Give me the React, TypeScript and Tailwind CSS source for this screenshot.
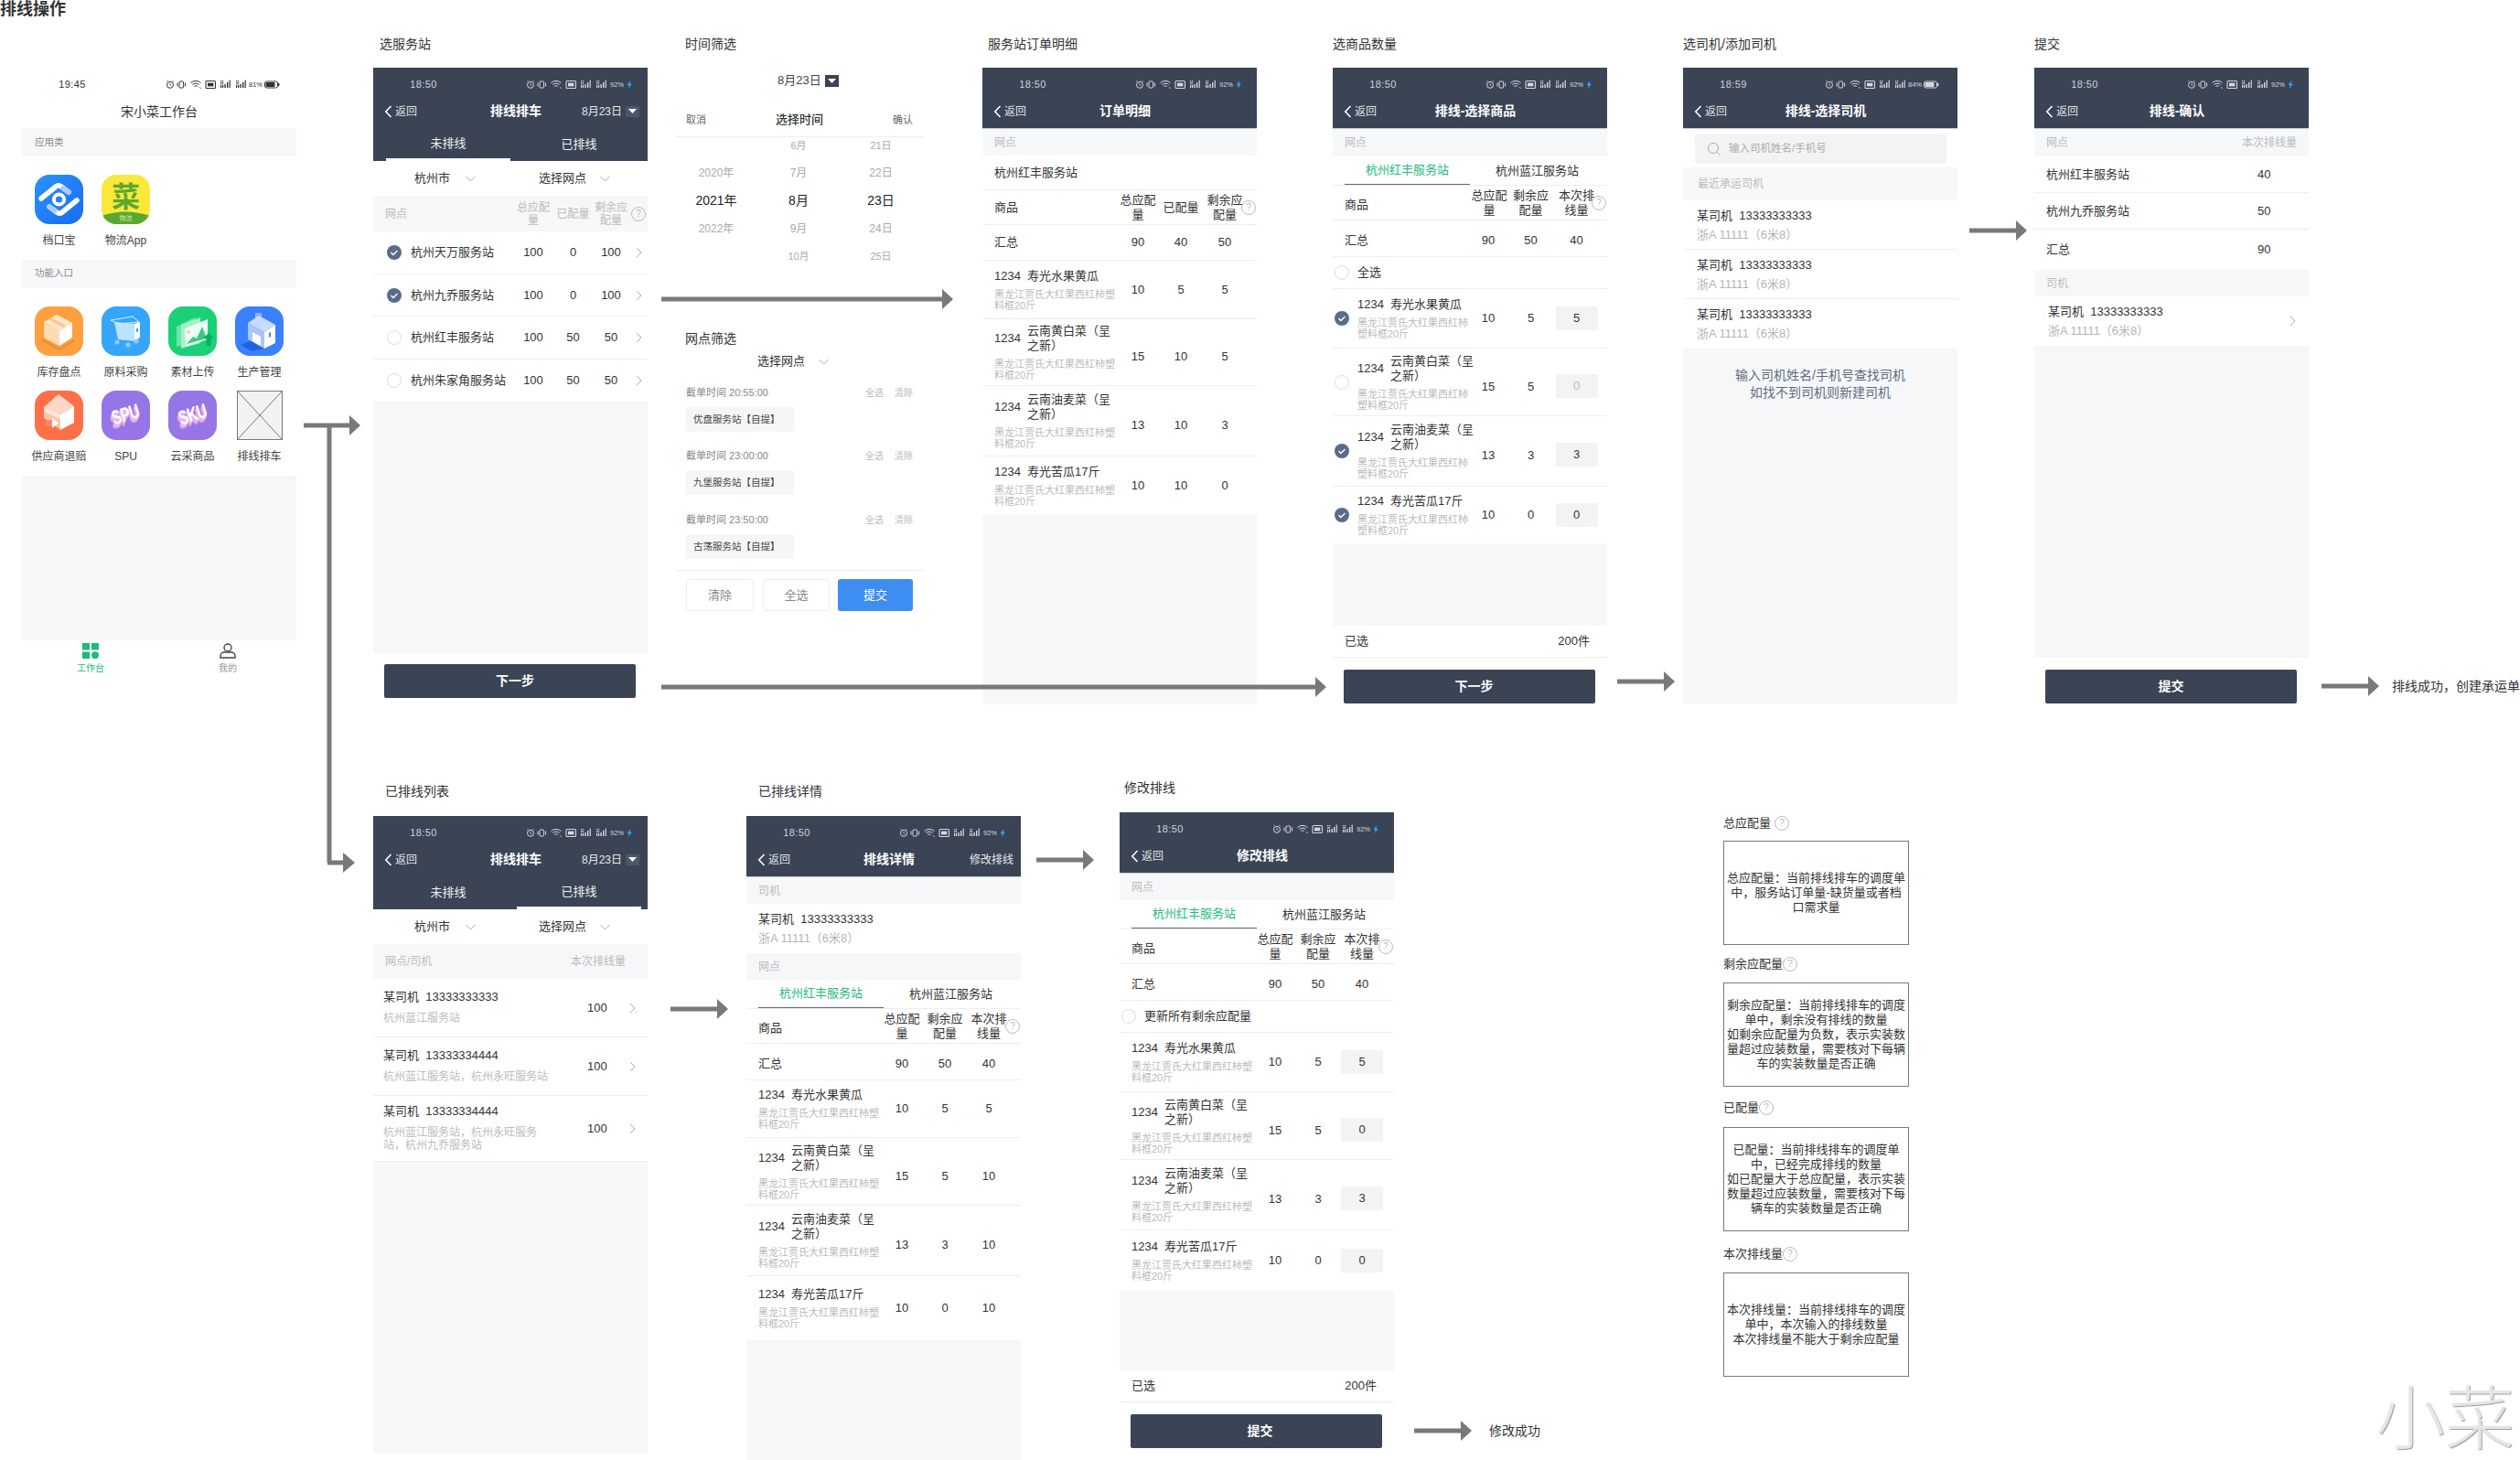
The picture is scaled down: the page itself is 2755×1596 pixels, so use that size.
import React from "react";

const HEAD = "bg-[#3a4454]";
const G3 = "grid grid-cols-[146px_48px_46px_50px_10px]";
const G4 = "grid grid-cols-[150px_40px_53px_47px_10px]";
const SUB3 = "黑龙江贾氏大红果西红柿塑料框20斤";

function StatusIcons({ color, pct, battery }: { color: string; pct: string; battery?: boolean }) {
  const sig = (x: number) => (
    <g fill={color}>
      <rect x={x} y="1" width="1.2" height="1.2" />
      <rect x={x + 2} y="1" width="1.2" height="1.2" />
      <rect x={x} y="3.2" width="3.2" height="1.2" />
      <rect x={x} y="5.6" width="1.2" height="3.4" />
      <rect x={x + 2} y="5.6" width="1.2" height="3.4" />
      <rect x={x + 4.4} y="5" width="1.4" height="4" />
      <rect x={x + 7} y="3" width="1.4" height="6" />
      <rect x={x + 9.6} y="0.6" width="1.2" height="8.4" />
    </g>
  );
  return (
    <svg width="125" height="11" viewBox="0 0 125 11" fill="none" className="shrink-0">
      <circle cx="5" cy="5.8" r="3.5" stroke={color} strokeWidth="1" />
      <path d="M5 4v2l1.4.8M1.2 2.2 2.6 1M8.8 2.2 7.4 1" stroke={color} strokeWidth=".8" />
      <rect x="15" y="2" width="4.6" height="7" rx=".8" stroke={color} strokeWidth="1" />
      <path d="M13 3.5v4M21.6 3.5v4" stroke={color} strokeWidth="1" />
      <path d="M27.5 3.6a8 8 0 0 1 11 0M29.4 5.6a5.2 5.2 0 0 1 7.2 0M31.3 7.5a2.4 2.4 0 0 1 3.4 0" stroke={color} strokeWidth="1" />
      <path d="M37 8.4 38.6 9.6" stroke={color} strokeWidth="1" />
      <rect x="44" y="1.5" width="10.5" height="8" rx="1" stroke={color} strokeWidth="1.1" />
      <rect x="46" y="3.6" width="6.4" height="3.8" fill={color} />
      {sig(60)}
      {sig(77)}
      <text x={battery ? 91 : 92} y="8" fontSize="7.5" fill={color} fontFamily="Liberation Sans">{pct}</text>
      {battery ? (
        <g>
          <rect x="108.5" y="2" width="14" height="7" rx="2" stroke={color} strokeWidth="1" />
          <rect x="109.5" y="3" width="10" height="5" rx="1" fill={color} />
          <rect x="123" y="4" width="1.4" height="3" fill={color} />
        </g>
      ) : (
        <path d="M114.5 1 110.5 6h2.2l-.9 4 4-5.2h-2.2z" fill="#2ea8ff" />
      )}
    </svg>
  );
}

function ChevronL() {
  return (
    <svg width="9" height="14" viewBox="0 0 9 14" fill="none" className="shrink-0">
      <path d="M7.5 1 1.8 7l5.7 6" stroke="#fff" strokeWidth="1.6" />
    </svg>
  );
}
function ChevronR({ className = "" }: { className?: string }) {
  return (
    <svg width="7" height="12" viewBox="0 0 7 12" fill="none" className={className}>
      <path d="M1 1l5 5-5 5" stroke="#aaa" strokeWidth="1" />
    </svg>
  );
}
function ChevronD() {
  return (
    <svg width="11" height="7" viewBox="0 0 11 7" fill="none" className="shrink-0">
      <path d="M.5 1 5.5 6l5-5" stroke="#aaa" strokeWidth="1" />
    </svg>
  );
}
function DateDrop() {
  return (
    <span className="w-[15px] h-[12px] bg-[#4b5668] flex items-center justify-center shrink-0">
      <svg width="9" height="5" viewBox="0 0 9 5"><path d="M0 0h9L4.5 5z" fill="#fff" /></svg>
    </span>
  );
}
function Help({ className = "" }: { className?: string }) {
  return (
    <span className={`w-[16px] h-[16px] rounded-full border border-[#bbb] text-[#bbb] text-[10px] leading-none flex items-center justify-center shrink-0 ${className}`}>?</span>
  );
}
function Check({ on }: { on?: boolean }) {
  return on ? (
    <svg width="16" height="16" viewBox="0 0 16 16" className="shrink-0">
      <circle cx="8" cy="8" r="8" fill="#5b6b8a" />
      <path d="M4.5 8l2.4 2.4 4.6-4.4" stroke="#fff" strokeWidth="1.4" fill="none" />
    </svg>
  ) : (
    <span className="w-[16px] h-[16px] rounded-full border border-[#ddd] bg-white shrink-0" />
  );
}

function Frame({ className, children }: { className: string; children: React.ReactNode }) {
  return <div className={`absolute flex flex-col w-[300px] bg-white ${className}`}>{children}</div>;
}

function Status({ time, pct, battery, light, home }: { time: string; pct: string; battery?: boolean; light?: boolean; home?: boolean }) {
  return (
    <div className={`h-[37px] flex items-center ${light ? "text-[#333]" : "text-[#cfd3d9]"}`}>
      <span className="w-[110px] text-center text-[11px] tracking-[.4px]">{time}</span>
      <span className={home ? "ml-[47px]" : battery ? "ml-[45px]" : "ml-[57px]"}>
        <StatusIcons color={light ? "#333" : "#d5d8dd"} pct={pct} battery={battery} />
      </span>
    </div>
  );
}

function Header({ title, time = "18:50", pct = "92%", battery, right, tabs, active }: { title: string; time?: string; pct?: string; battery?: boolean; right?: React.ReactNode; tabs?: boolean; active?: number }) {
  return (
    <div className={`${HEAD} shrink-0 text-white ${tabs ? "" : "border-b border-[#c9cdd4]"}`}>
      <Status time={time} pct={pct} battery={battery} />
      <div className="h-[20px] mb-[9px] pl-[12px] grid grid-cols-[1fr_auto_1fr] items-center">
        <div className="flex items-center gap-[3px] text-[12px] text-[#dfe2e6]"><ChevronL /><span>返回</span></div>
        <div className="text-[14px] font-bold">{title}</div>
        <div className="flex items-center justify-end gap-[4px] pr-[9px] text-[12px] text-[#e6e8eb]">{right}</div>
      </div>
      {tabs && (
        <div className="h-[36px] grid grid-cols-[150px_150px] text-[13px] text-[#f1f2f4]">
          <div className={`ml-[14px] w-[136px] flex items-center justify-center ${active === 0 ? "border-b-[3px] border-white" : ""}`}>未排线</div>
          <div className={`ml-[7px] w-[136px] flex items-center justify-center ${active === 1 ? "border-b-[3px] border-white" : ""}`}>已排线</div>
        </div>
      )}
    </div>
  );
}

function FilterRow() {
  return (
    <div className="h-[38px] shrink-0 grid grid-cols-[150px_150px] text-[13px] text-[#333]">
      <div className="flex items-center pl-[45px] gap-[17px]"><span>杭州市</span><ChevronD /></div>
      <div className="flex items-center pl-[31px] gap-[15px]"><span>选择网点</span><ChevronD /></div>
    </div>
  );
}

function GrayLabel({ text, right, h = "h-[30px]" }: { text: string; right?: string; h?: string }) {
  return (
    <div className={`${h} shrink-0 bg-[#f6f7f9] flex items-center justify-between px-[13px] text-[12px] text-[#bbb]`}>
      <span>{text}</span>
      {right && <span>{right}</span>}
    </div>
  );
}

function Bottom({ label, shift, pt = "pt-[13px]" }: { label: string; shift?: string; pt?: string }) {
  return (
    <div className={`shrink-0 ${pt}`}>
      <div className={`ml-[12px] w-[275px] h-[37px] rounded-[2px] ${HEAD} text-white text-[14px] font-bold flex items-center justify-center ${shift ?? ""}`}>{label}</div>
    </div>
  );
}

function ProdTabs() {
  return (
    <div className="h-[32px] shrink-0 flex border-b border-[#eee] text-[13px]">
      <div className="ml-[13px] w-[137px] flex items-center justify-center text-[#22bb7b] border-b border-[#666]">杭州红丰服务站</div>
      <div className="w-[147px] flex items-center justify-center text-[#333]">杭州蓝江服务站</div>
    </div>
  );
}

function TableHead({ grid, cols, pad }: { grid: string; cols: string[]; pad?: boolean }) {
  return (
    <div className={`${grid} h-[38px] shrink-0 items-center border-b border-[#eee] text-[13px] leading-[16px] text-[#333]`}>
      <span className={`pl-[13px] ${pad ? "pt-[4px]" : ""}`}>商品</span>
      {cols.map((c) => (
        <span key={c} className="block w-[42px] mx-auto text-center">{c}</span>
      ))}
      <Help className="-ml-[7px]" />
    </div>
  );
}

function Total({ grid, vals, h = "h-[40px]", pad }: { grid: string; vals: number[]; h?: string; pad?: boolean }) {
  return (
    <div className={`${grid} ${h} shrink-0 items-center border-b border-[#eee] text-[13px] text-[#333] ${pad ? "pt-[5px]" : ""}`}>
      <span className="pl-[13px]">汇总</span>
      {vals.map((v, i) => (
        <span key={i} className="text-center">{v}</span>
      ))}
    </div>
  );
}

type It = { name: string; vals: number[]; h: string; wrap?: boolean; sub?: string; on?: boolean; faded?: boolean };

function Item({ it, grid, input, check, last, subWidth = "w-[133px]" }: { it: It; grid: string; input?: boolean; check?: boolean; last?: boolean; subWidth?: string }) {
  const valCls = `text-center ${it.wrap ? "pt-[10px]" : ""}`;
  return (
    <div className={`${grid} ${it.h} shrink-0 items-center text-[13px] text-[#333] ${last ? "" : "border-b border-[#eee]"}`}>
      <div className={`flex items-center ${check ? "pl-[2px] gap-[9px]" : "pl-[13px]"}`}>
        {check && <Check on={it.on} />}
        <div className={`${subWidth} shrink-0`}>
          <div className="flex items-center gap-[7px] leading-[16px] whitespace-nowrap">
            <span className="shrink-0">1234</span>
            <span className="w-[92px] shrink-0 whitespace-normal">{it.name}</span>
          </div>
          <div className="mt-[6px] text-[11px] leading-[12px] text-[#bbb]">{it.sub ?? SUB3}</div>
        </div>
      </div>
      <span className={valCls}>{it.vals[0]}</span>
      <span className={valCls}>{it.vals[1]}</span>
      {input ? (
        <span className={`justify-self-center w-[46px] h-[26px] rounded-[2px] bg-[#f3f3f3] flex items-center justify-center ${it.wrap ? "mt-[8px]" : ""} ${it.faded ? "text-[#bbb]" : ""}`}>{it.vals[2]}</span>
      ) : (
        <span className={valCls}>{it.vals[2]}</span>
      )}
    </div>
  );
}

function Gray() {
  return <div className="flex-1 bg-[#f6f7f9]" />;
}

function Label({ className, children }: { className: string; children: React.ReactNode }) {
  return <div className={`absolute text-[14px] leading-[20px] text-[#333] whitespace-nowrap ${className}`}>{children}</div>;
}

function Arrow({ className, w }: { className: string; w: number }) {
  return (
    <svg width={w} height="22" viewBox={`0 0 ${w} 22`} className={`absolute ${className}`}>
      <rect x="0" y="8.5" width={w - 11} height="5" fill="#797979" />
      <polygon points={`${w - 12},0 ${w},11 ${w - 12},22`} fill="#797979" />
    </svg>
  );
}

function AppSvg({ children }: { children: React.ReactNode }) {
  return (
    <svg width="53" height="54" viewBox="0 0 53 54" className="shrink-0">
      <defs>
        <clipPath id="squircle"><rect width="53" height="54" rx="16" /></clipPath>
      </defs>
      <g clipPath="url(#squircle)">{children}</g>
    </svg>
  );
}

function Word({ text, bg }: { text: string; bg: string }) {
  return (
    <div className={`w-[53px] h-[54px] rounded-[16px] shrink-0 flex items-center justify-center overflow-hidden ${bg}`}>
      <span className="text-[15px] font-bold text-white -rotate-[18deg] scale-y-[1.45] [text-shadow:-1px_1px_0_#edb5f2,-2px_2px_0_#edb5f2,-3px_3px_0_#d99be6]">{text}</span>
    </div>
  );
}

const apps1: [string, React.ReactNode][] = [
  [
    "档口宝",
    <AppSvg key="a">
      <defs>
        <linearGradient id="dkb" x1="0" y1="0" x2="1" y2="1"><stop offset="0" stopColor="#2b93ff" /><stop offset="1" stopColor="#176cf0" /></linearGradient>
      </defs>
      <rect width="53" height="54" fill="url(#dkb)" />
      <path d="M7 26 23 13q3-2.5 6 0l8 6" stroke="#fff" strokeWidth="5.5" strokeLinecap="round" fill="none" />
      <path d="M46 28 30 41q-3 2.5-6 0l-8-6" stroke="#fff" strokeWidth="5.5" strokeLinecap="round" fill="none" />
      <path d="M31 15l6 4M22 39l-6-4" stroke="#a9ccff" strokeWidth="5.5" strokeLinecap="round" />
      <circle cx="26.5" cy="27" r="5.6" fill="none" stroke="#fff" strokeWidth="4" />
    </AppSvg>,
  ],
  [
    "物流App",
    <AppSvg key="b">
      <rect width="53" height="54" fill="#fbe83a" />
      <path d="M0 45Q26 36 53 45V54H0z" fill="#5aa832" />
      <text x="26.5" y="35" textAnchor="middle" fontSize="31" fontWeight="700" fill="#5aa832" fontFamily="Noto Sans CJK SC">菜</text>
      <text x="26.5" y="50" textAnchor="middle" fontSize="7" fill="#d5e98e" fontFamily="Noto Sans CJK SC">物流</text>
    </AppSvg>,
  ],
];

const apps2: [string, React.ReactNode][] = [
  [
    "库存盘点",
    <AppSvg key="a">
      <rect width="53" height="54" fill="#ff9f40" />
      <path d="M24 9 10 17l17 10 14-9z" fill="#ffe6c9" />
      <path d="M10 17l17 10v16L10 34z" fill="#ffdcb4" />
      <path d="M27 27l14-9v16l-14 9z" fill="#fff" />
      <path d="M18 12l16 9-3 2-16-9z" fill="#f6c692" />
      <path d="M8 36l19 11 16-10" stroke="#e68a33" strokeWidth="2" fill="none" />
    </AppSvg>,
  ],
  [
    "原料采购",
    <AppSvg key="b">
      <rect width="53" height="54" fill="#35a6fb" />
      <path d="M14 17l22 2v19l-18-2z" fill="#bde4ff" />
      <path d="M36 19l6-2v17l-6 4z" fill="#fff" />
      <path d="M10 15l24-4 7 6-22 2z" fill="none" stroke="#d9f0ff" strokeWidth="1" />
      <rect x="38" y="24" width="2" height="4" fill="#35a6fb" />
      <circle cx="17" cy="39" r="2.6" fill="#8fcdfb" />
      <circle cx="29" cy="42" r="2.6" fill="#8fcdfb" />
      <circle cx="38" cy="38" r="2.6" fill="#8fcdfb" />
    </AppSvg>,
  ],
  [
    "素材上传",
    <AppSvg key="c">
      <rect width="53" height="54" fill="#1bd176" />
      <path d="M9 22l20-10v26L9 44z" fill="#6fe3a8" />
      <path d="M14 20l21-8v28l-21 6z" fill="#a6efc8" />
      <path d="M18 24l25-10v22l-24 8z" fill="#eafff4" />
      <path d="M20 41l7-8 4 2 6-13 5 13z" fill="#3cc985" />
      <circle cx="22" cy="28" r="2" fill="#ffc9c9" />
      <path d="M44 29l6 6h-3.5v8h-5v-8H38z" fill="#0fae67" />
    </AppSvg>,
  ],
  [
    "生产管理",
    <AppSvg key="d">
      <rect width="53" height="54" fill="#3a80ff" />
      <path d="M6 42l14-6 12 10-14 3z" fill="#1f63e0" />
      <rect x="22" y="7" width="7" height="7" fill="#8fb0ff" />
      <path d="M14 18l12-8 18 10-12 8z" fill="#c9dcff" />
      <path d="M14 18l18 10v18L14 36z" fill="#a8c5ff" />
      <path d="M32 28l12-8v20l-12 6z" fill="#fff" />
      <path d="M19 28l9 5v10l-9-5z" fill="#fff" />
      <path d="M37 29l2-1v5l-2 1z" fill="#3a80ff" />
    </AppSvg>,
  ],
  [
    "供应商退赔",
    <AppSvg key="e">
      <rect width="53" height="54" fill="#ff7048" />
      <path d="M26 4 43 17 28 26 10 18z" fill="#ffd7c7" />
      <path d="M28 26l15-9v18l-15 8z" fill="#fff" />
      <path d="M10 18l18 8v17L10 30z" fill="#ffc4ae" />
      <path d="M10 18l18 8v5L10 23z" fill="#ffe7dd" />
      <rect x="12" y="32" width="7" height="7" fill="#ff8a66" />
      <path d="M19 30l7 5.5-7 5.5z" fill="#fff" />
    </AppSvg>,
  ],
  ["SPU", <Word key="f" text="SPU" bg="bg-[#9675e6]" />],
  ["云采商品", <Word key="g" text="SKU" bg="bg-[#9675e6]" />],
  [
    "排线排车",
    <svg key="h" width="50" height="54" viewBox="0 0 50 54" className="shrink-0">
      <rect x=".5" y=".5" width="49" height="53" fill="#f2f2f2" stroke="#797979" />
      <path d="M.5.5l49 53M49.5.5l-49 53" stroke="#797979" />
    </svg>,
  ],
];

function AppCell({ label, icon }: { label: string; icon: React.ReactNode }) {
  return (
    <div className="flex flex-col items-center h-[92px]">
      {icon}
      <span className="mt-[11px] text-[12px] leading-[14px] text-[#444] whitespace-nowrap">{label}</span>
    </div>
  );
}

function Home() {
  return (
    <Frame className="left-[24px] top-[74px] h-[670px]">
      <Status time="19:45" pct="81%" battery light home />
      <div className="h-[29px] pb-[7px] flex items-center justify-center text-[14px] text-[#333]">宋小菜工作台</div>
      <div className="h-[31px] bg-[#f6f7f9] flex items-center pl-[14px] text-[10.5px] text-[#888]">应用类</div>
      <div className="pt-[20px] h-[112.5px] grid grid-cols-[73px_73px_73px_73px] pl-[4px]">
        {apps1.map(([l, i]) => <AppCell key={l} label={l} icon={i} />)}
      </div>
      <div className="h-[31px] bg-[#f6f7f9] flex items-center pl-[14px] text-[10.5px] text-[#888]">功能入口</div>
      <div className="pt-[20px] h-[205px] grid grid-cols-[73px_73px_73px_73px] auto-rows-[92px] pl-[4px]">
        {apps2.map(([l, i]) => <AppCell key={l} label={l} icon={i} />)}
      </div>
      <Gray />
      <div className="h-[44px] grid grid-cols-2 shrink-0 pt-[3px]">
        <div className="flex flex-col items-center">
          <svg width="18" height="17" viewBox="0 0 18 17">
            <rect width="8" height="7.5" fill="#1fb97a" />
            <rect x="10" width="8" height="7.5" fill="#1fb97a" />
            <rect y="9.5" width="8" height="7.5" fill="#1fb97a" />
            <circle cx="14" cy="13.2" r="4" fill="#1fb97a" />
          </svg>
          <span className="mt-[3px] text-[10px] text-[#22bb7b]">工作台</span>
        </div>
        <div className="flex flex-col items-center">
          <svg width="18" height="17" viewBox="0 0 18 17" fill="none">
            <circle cx="9" cy="5" r="4" stroke="#444" strokeWidth="1.4" />
            <path d="M1 16v-2a4 4 0 0 1 4-4h8a4 4 0 0 1 4 4v2z" stroke="#444" strokeWidth="1.4" />
          </svg>
          <span className="mt-[3px] text-[10px] text-[#999]">我的</span>
        </div>
      </div>
    </Frame>
  );
}

const s1Rows: [string, boolean, number, number, string][] = [
  ["杭州天万服务站", true, 0, 100, "h-[47px]"],
  ["杭州九乔服务站", true, 0, 100, "h-[46px]"],
  ["杭州红丰服务站", false, 50, 50, "h-[47px]"],
  ["杭州朱家角服务站", false, 50, 50, "h-[46px]"],
];

function S1() {
  const g = "grid grid-cols-[153px_44px_43px_40px_20px]";
  return (
    <Frame className="left-[408px] top-[74px] h-[689px]">
      <Header title="排线排车" tabs active={0} right={<><span>8月23日</span><DateDrop /></>} />
      <FilterRow />
      <div className={`${g} h-[39px] shrink-0 items-center bg-[#f6f7f9] text-[12px] leading-[14px] text-[#bbb]`}>
        <span className="pl-[13px]">网点</span>
        <span className="block w-[38px] mx-auto text-center">总应配量</span>
        <span className="block w-[38px] mx-auto text-center">已配量</span>
        <span className="block w-[38px] mx-auto text-center">剩余应配量</span>
        <Help className="mx-auto" />
      </div>
      {s1Rows.map(([n, on, a, b, h], i) => (
        <div key={n} className={`${g} ${h} shrink-0 items-center text-[13px] text-[#333] ${i < 3 ? "border-b border-[#eee]" : ""}`}>
          <div className="flex items-center pl-[15px] gap-[10px] whitespace-nowrap"><Check on={on} /><span>{n}</span></div>
          <span className="text-center">100</span>
          <span className="text-center">{a}</span>
          <span className="text-center">{b}</span>
          <ChevronR className="justify-self-center" />
        </div>
      ))}
      <Gray />
      <Bottom label="下一步" shift="pl-[11px]" pt="pt-[12px]" />
    </Frame>
  );
}

const wheel: [string, string, string, string][] = [
  ["", "6月", "21日", "text-[11px] text-[#aaa]"],
  ["2020年", "7月", "22日", "text-[12px] text-[#aaa]"],
  ["2021年", "8月", "23日", "text-[14px] text-[#222]"],
  ["2022年", "9月", "24日", "text-[12px] text-[#aaa]"],
  ["", "10月", "25日", "text-[11px] text-[#aaa]"],
];

function TimeFilter() {
  return (
    <div className="absolute left-[738px] top-[38px] w-[272px]">
      <div className="h-[20px] pl-[11px] text-[14px] leading-[20px] text-[#333]">时间筛选</div>
      <div className="mt-[20px] h-[20px] pl-[112px] flex items-center gap-[4px] text-[13px] text-[#444]">
        <span>8月23日</span>
        <span className="w-[15px] h-[13px] bg-[#3a4454] flex items-center justify-center">
          <svg width="9" height="5" viewBox="0 0 9 5"><path d="M0 0h9L4.5 5z" fill="#fff" /></svg>
        </span>
      </div>
      <div className="mt-[15px] h-[37px] grid grid-cols-3 items-center px-[12px] border-b border-[#eee]">
        <span className="text-[11px] text-[#666]">取消</span>
        <span className="text-[13px] font-medium text-[#333] text-center">选择时间</span>
        <span className="text-[11px] text-[#666] text-right">确认</span>
      </div>
      <div className="mt-[-6px] grid grid-cols-[90px_90px_90px] auto-rows-[30.25px]">
        {wheel.map(([a, b, c, cls]) => (
          <React.Fragment key={b}>
            <span className={`flex items-center justify-center ${cls}`}>{a}</span>
            <span className={`flex items-center justify-center ${cls}`}>{b}</span>
            <span className={`flex items-center justify-center ${cls}`}>{c}</span>
          </React.Fragment>
        ))}
      </div>
    </div>
  );
}

const stations: [string, string, string][] = [
  ["截单时间 20:55:00", "优盘服务站【自提】", "mt-[17px]"],
  ["截单时间 23:00:00", "九堡服务站【自提】", "mt-[19px]"],
  ["截单时间 23:50:00", "古荡服务站【自提】", "mt-[20px]"],
];

function StationFilter() {
  return (
    <div className="absolute left-[738px] top-[360px] w-[272px]">
      <div className="h-[20px] pl-[11px] text-[14px] leading-[20px] text-[#333]">网点筛选</div>
      <div className="mt-[5px] h-[20px] pl-[90px] flex items-center gap-[15px] text-[13px] text-[#333]"><span>选择网点</span><ChevronD /></div>
      {stations.map(([t, c, m]) => (
        <div key={t} className={m}>
          <div className="h-[14px] flex items-center justify-between pl-[12px] pr-[12px]">
            <span className="text-[11px] text-[#888]">{t}</span>
            <span className="flex gap-[12px] text-[10px] text-[#bbb]"><span>全选</span><span>清除</span></span>
          </div>
          <div className="mt-[9px] ml-[12px] w-[118px] h-[27px] pl-[8px] rounded-[2px] bg-[#f6f6f6] flex items-center text-[10.5px] text-[#444] whitespace-nowrap">{c}</div>
        </div>
      ))}
      <div className="mt-[12px] border-t border-[#eee]" />
      <div className="mt-[9px] pl-[12px] flex text-[13px]">
        <div className="w-[74px] h-[35px] rounded-[3px] border border-[#eee] text-[#888] flex items-center justify-center">清除</div>
        <div className="ml-[10px] w-[73px] h-[35px] rounded-[3px] border border-[#eee] text-[#888] flex items-center justify-center">全选</div>
        <div className="ml-[9px] w-[82px] h-[35px] rounded-[3px] bg-[#3d8ef0] text-white flex items-center justify-center">提交</div>
      </div>
    </div>
  );
}

function S3() {
  const items: It[] = [
    { name: "寿光水果黄瓜", vals: [10, 5, 5], h: "h-[64px]" },
    { name: "云南黄白菜（呈之新）", vals: [15, 10, 5], h: "h-[73px]", wrap: true },
    { name: "云南油麦菜（呈之新）", vals: [13, 10, 3], h: "h-[77px]", wrap: true },
    { name: "寿光苦瓜17斤", vals: [10, 10, 0], h: "h-[64px]" },
  ];
  return (
    <Frame className="left-[1074px] top-[74px] h-[696px]">
      <Header title="订单明细" />
      <GrayLabel text="网点" h="h-[29px]" />
      <div className="h-[38px] shrink-0 pl-[13px] flex items-center border-b border-[#eee] text-[13px] text-[#333]">杭州红丰服务站</div>
      <TableHead grid={G3} cols={["总应配量", "已配量", "剩余应配量"]} />
      <Total grid={G3} vals={[90, 40, 50]} h="h-[39px]" />
      {items.map((it, i) => <Item key={i} it={it} grid={G3} last={i === 3} />)}
      <Gray />
    </Frame>
  );
}

function S4() {
  const items: It[] = [
    { name: "寿光水果黄瓜", vals: [10, 5, 5], h: "h-[65px]", on: true },
    { name: "云南黄白菜（呈之新）", vals: [15, 5, 0], h: "h-[74px]", wrap: true, faded: true },
    { name: "云南油麦菜（呈之新）", vals: [13, 3, 3], h: "h-[77px]", wrap: true, on: true },
    { name: "寿光苦瓜17斤", vals: [10, 0, 0], h: "h-[62px]", on: true },
  ];
  return (
    <Frame className="left-[1457px] top-[74px] h-[695px]">
      <Header title="排线-选择商品" />
      <GrayLabel text="网点" />
      <ProdTabs />
      <TableHead grid={G4} cols={["总应配量", "剩余应配量", "本次排线量"]} pad />
      <Total grid={G4} vals={[90, 50, 40]} pad />
      <div className="h-[35px] shrink-0 flex items-center pl-[2px] gap-[9px] border-b border-[#eee] text-[13px] text-[#333]"><Check /><span>全选</span></div>
      {items.map((it, i) => <Item key={i} it={it} grid={G4} input check last={i === 3} subWidth="w-[123px]" />)}
      <Gray />
      <div className="h-[35px] shrink-0 flex items-center justify-between pl-[13px] pr-[19px] border-b border-[#eee] text-[13px] text-[#333]"><span>已选</span><span>200件</span></div>
      <Bottom label="下一步" shift="pl-[10px]" />
    </Frame>
  );
}

function DriverRow({ h = "h-[54px]", border = true, chevron }: { h?: string; border?: boolean; chevron?: boolean }) {
  return (
    <div className={`${h} shrink-0 flex items-center justify-between pl-[15px] pr-[14px] ${border ? "border-b border-[#eee]" : ""}`}>
      <div className="text-[13px] leading-[21px]">
        <div className="text-[#333]">某司机&nbsp;&nbsp;13333333333</div>
        <div className="text-[#b5b5b5]">浙A 11111（6米8）</div>
      </div>
      {chevron && <ChevronR />}
    </div>
  );
}

function S5() {
  return (
    <Frame className="left-[1840px] top-[74px] h-[695px]">
      <Header title="排线-选择司机" time="18:59" pct="84%" battery />
      <div className="h-[42px] shrink-0 pl-[13px] pt-[5px]">
        <div className="w-[275px] h-[33px] rounded-[2px] bg-[#f3f3f3] flex items-center pl-[13px] gap-[8px] text-[11.5px] text-[#aaa]">
          <svg width="16" height="16" viewBox="0 0 16 16" fill="none"><circle cx="7" cy="7" r="5.5" stroke="#aaa" /><path d="M11 11l4 4" stroke="#aaa" /></svg>
          <span>输入司机姓名/手机号</span>
        </div>
      </div>
      <div className="h-[36px] shrink-0 bg-[#f6f7f9] flex items-center pl-[16px] text-[12px] text-[#bbb]">最近承运司机</div>
      <DriverRow />
      <DriverRow />
      <DriverRow border={false} />
      <div className="flex-1 bg-[#f6f7f9] pt-[20px] text-center text-[14px] leading-[19px] text-[#5d6d80]">
        输入司机姓名/手机号查找司机<br />如找不到司机则新建司机
      </div>
    </Frame>
  );
}

function S6() {
  const rows: [string, number, string, boolean][] = [
    ["杭州红丰服务站", 40, "h-[40px]", true],
    ["杭州九乔服务站", 50, "h-[40px]", true],
    ["汇总", 90, "h-[44px]", false],
  ];
  return (
    <Frame className="left-[2224px] top-[74px] h-[695px]">
      <Header title="排线-确认" />
      <GrayLabel text="网点" right="本次排线量" />
      {rows.map(([n, v, h, b]) => (
        <div key={n} className={`${h} shrink-0 flex items-center pl-[13px] text-[13px] text-[#333] ${b ? "border-b border-[#eee]" : ""}`}>
          <span className="w-[231px]">{n}</span>
          <span className="font-medium">{v}</span>
        </div>
      ))}
      <GrayLabel text="司机" h="h-[29px]" />
      <DriverRow chevron border={false} />
      <Gray />
      <Bottom label="提交" />
    </Frame>
  );
}

function S7() {
  const rows: [string, string, string][] = [
    ["某司机  13333333333", "杭州蓝江服务站", "h-[64px]"],
    ["某司机  13333334444", "杭州蓝江服务站，杭州永旺服务站", "h-[64px]"],
    ["某司机  13333334444", "杭州蓝江服务站，杭州永旺服务站，杭州九乔服务站", "h-[72px]"],
  ];
  return (
    <Frame className="left-[408px] top-[892px] h-[696px]">
      <Header title="排线排车" tabs active={1} right={<><span>8月23日</span><DateDrop /></>} />
      <FilterRow />
      <div className="h-[38px] shrink-0 bg-[#f6f7f9] flex items-center justify-between pl-[13px] pr-[24px] text-[12px] text-[#bbb]">
        <span>网点/司机</span>
        <span>本次排线量</span>
      </div>
      {rows.map(([a, b, h]) => (
        <div key={a + h} className={`${h} shrink-0 flex items-center pl-[11px] border-b border-[#eee]`}>
          <div className="w-[180px] pb-[2px]">
            <div className="text-[13px] leading-[16px] text-[#333] whitespace-pre">{a}</div>
            <div className="mt-[8px] text-[12px] leading-[14px] text-[#bbb]">{b}</div>
          </div>
          <span className="ml-[43px] w-[20px] text-center text-[13px] text-[#333]">100</span>
          <ChevronR className="ml-[26px]" />
        </div>
      ))}
      <Gray />
    </Frame>
  );
}

function S8() {
  const items: It[] = [
    { name: "寿光水果黄瓜", vals: [10, 5, 5], h: "h-[63px]" },
    { name: "云南黄白菜（呈之新）", vals: [15, 5, 10], h: "h-[74px]", wrap: true },
    { name: "云南油麦菜（呈之新）", vals: [13, 3, 10], h: "h-[77px]", wrap: true },
    { name: "寿光苦瓜17斤", vals: [10, 0, 10], h: "h-[70px]" },
  ];
  return (
    <Frame className="left-[816px] top-[892px] h-[704px]">
      <Header title="排线详情" right={<span className="mr-[-1px]">修改排线</span>} />
      <GrayLabel text="司机" h="h-[29px]" />
      <div className="h-[54px] shrink-0 flex items-center pl-[13px]">
        <div className="text-[13px] leading-[21px]">
          <div className="text-[#333]">某司机&nbsp;&nbsp;13333333333</div>
          <div className="text-[#b5b5b5]">浙A 11111（6米8）</div>
        </div>
      </div>
      <GrayLabel text="网点" h="h-[29px]" />
      <ProdTabs />
      <TableHead grid={G3} cols={["总应配量", "剩余应配量", "本次排线量"]} pad />
      <Total grid={G3} vals={[90, 50, 40]} pad />
      {items.map((it, i) => <Item key={i} it={it} grid={G3} last={i === 3} />)}
      <Gray />
    </Frame>
  );
}

function S9() {
  const items: It[] = [
    { name: "寿光水果黄瓜", vals: [10, 5, 5], h: "h-[65px]" },
    { name: "云南黄白菜（呈之新）", vals: [15, 5, 0], h: "h-[74px]", wrap: true },
    { name: "云南油麦菜（呈之新）", vals: [13, 3, 3], h: "h-[77px]", wrap: true },
    { name: "寿光苦瓜17斤", vals: [10, 0, 0], h: "h-[66px]" },
  ];
  return (
    <Frame className="left-[1224px] top-[888px] h-[695px]">
      <Header title="修改排线" />
      <GrayLabel text="网点" h="h-[29px]" />
      <ProdTabs />
      <TableHead grid={G3} cols={["总应配量", "剩余应配量", "本次排线量"]} pad />
      <Total grid={G3} vals={[90, 50, 40]} pad />
      <div className="h-[35px] shrink-0 flex items-center pl-[2px] gap-[9px] border-b border-[#eee] text-[13px] text-[#333]"><Check /><span>更新所有剩余应配量</span></div>
      {items.map((it, i) => <Item key={i} it={it} grid={G3} input last={i === 3} />)}
      <Gray />
      <div className="h-[35px] shrink-0 flex items-center justify-between pl-[13px] pr-[19px] border-b border-[#eee] text-[13px] text-[#333]"><span>已选</span><span>200件</span></div>
      <Bottom label="提交" shift="pl-[8px]" />
    </Frame>
  );
}

function Note({ lblCls, boxCls, label, children }: { lblCls: string; boxCls: string; label: string; children: React.ReactNode }) {
  return (
    <>
      <div className={`absolute left-[1884px] flex items-center h-[18px] text-[13px] text-[#333] ${lblCls}`}>
        <span>{label}</span>
        <Help />
      </div>
      <div className={`absolute left-[1884px] w-[203px] h-[114px] border border-[#797979] flex items-center justify-center text-center text-[13px] leading-[16px] text-[#333] px-[2px] ${boxCls}`}>
        <div>{children}</div>
      </div>
    </>
  );
}

export default function App() {
  return (
    <div className="relative w-[2755px] h-[1596px] overflow-hidden bg-white text-[#333] font-['Liberation_Sans','Noto_Sans_CJK_SC',sans-serif]">
      <h1 className="absolute left-0 top-0 text-[18px] leading-[20px] font-bold text-[#333]">排线操作</h1>

      <Label className="left-[415px] top-[38px]">选服务站</Label>
      <Label className="left-[1080px] top-[38px]">服务站订单明细</Label>
      <Label className="left-[1457px] top-[38px]">选商品数量</Label>
      <Label className="left-[1840px] top-[38px]">选司机/添加司机</Label>
      <Label className="left-[2224px] top-[38px]">提交</Label>
      <Label className="left-[421px] top-[855px]">已排线列表</Label>
      <Label className="left-[829px] top-[855px]">已排线详情</Label>
      <Label className="left-[1229px] top-[851px]">修改排线</Label>
      <Label className="left-[2615px] top-[740px]">排线成功，创建承运单</Label>
      <Label className="left-[1628px] top-[1554px]">修改成功</Label>

      <Home />
      <S1 />
      <TimeFilter />
      <StationFilter />
      <S3 />
      <S4 />
      <S5 />
      <S6 />
      <S7 />
      <S8 />
      <S9 />

      <svg width="62" height="500" viewBox="0 0 62 500" className="absolute left-[332px] top-[454px]">
        <rect x="0" y="8.5" width="50" height="5" fill="#797979" />
        <polygon points="50,0 62,11 50,22" fill="#797979" />
        <rect x="25.5" y="11" width="5" height="478" fill="#797979" />
        <rect x="26" y="486.5" width="18" height="5" fill="#797979" />
        <polygon points="43,478 56,489 43,500" fill="#797979" />
      </svg>
      <Arrow className="left-[723px] top-[316px]" w={319} />
      <Arrow className="left-[723px] top-[740px]" w={727} />
      <Arrow className="left-[1768px] top-[734px]" w={63} />
      <Arrow className="left-[2153px] top-[241px]" w={63} />
      <Arrow className="left-[2538px] top-[739px]" w={63} />
      <Arrow className="left-[733px] top-[1092px]" w={63} />
      <Arrow className="left-[1133px] top-[929px]" w={63} />
      <Arrow className="left-[1546px] top-[1553px]" w={63} />

      <Note lblCls="top-[891px] gap-[4px]" boxCls="top-[919px]" label="总应配量">
        总应配量：当前排线排车的调度单中，服务站订单量-缺货量或者档口需求量
      </Note>
      <Note lblCls="top-[1045px]" boxCls="top-[1074px]" label="剩余应配量">
        剩余应配量：当前排线排车的调度单中，剩余没有排线的数量<br />如剩余应配量为负数，表示实装数量超过应装数量，需要核对下每辆车的实装数量是否正确
      </Note>
      <Note lblCls="top-[1202px]" boxCls="top-[1232px]" label="已配量">
        已配量：当前排线排车的调度单中，已经完成排线的数量<br />如已配量大于总应配量，表示实装数量超过应装数量，需要核对下每辆车的实装数量是否正确
      </Note>
      <Note lblCls="top-[1362px]" boxCls="top-[1391px]" label="本次排线量">
        本次排线量：当前排线排车的调度单中，本次输入的排线数量<br />本次排线量不能大于剩余应配量
      </Note>

      <div className="absolute right-[6px] top-[1502px] text-[76px] leading-[100px] font-light text-[#e6e6e6] [text-shadow:1px_1px_1px_#999]">小菜</div>
    </div>
  );
}
